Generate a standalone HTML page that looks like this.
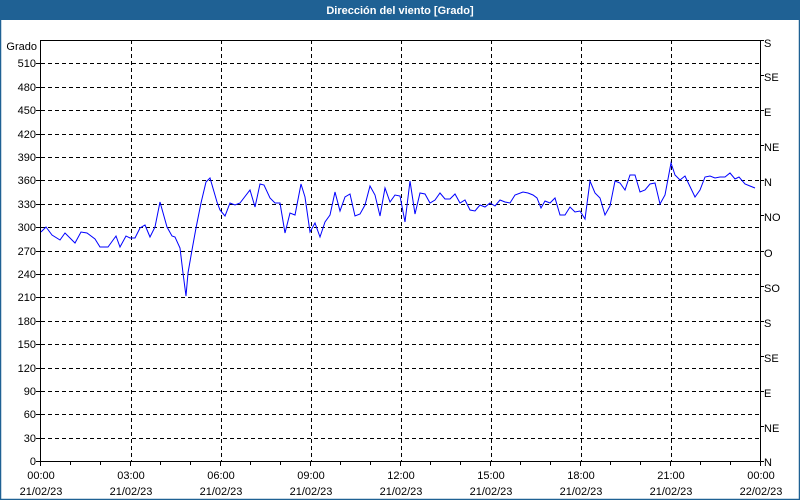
<!DOCTYPE html>
<html><head><meta charset="utf-8"><style>
html,body{margin:0;padding:0;background:#fff}
svg{display:block}
text{font-family:"Liberation Sans",sans-serif;font-size:11px;fill:#000}
</style></head><body>
<svg width="800" height="500" viewBox="0 0 800 500" xmlns="http://www.w3.org/2000/svg">
<rect x="0" y="0" width="800" height="500" fill="#fff"/>
<rect x="0.5" y="0.5" width="799" height="499" fill="none" stroke="#1f6194" stroke-width="1.5"/>
<rect x="0" y="0" width="800" height="20" fill="#1f6194"/>
<text x="400" y="14" text-anchor="middle" style="fill:#fff;font-weight:bold;font-size:11px">Dirección del viento [Grado]</text>
<g stroke="#000" stroke-width="1" stroke-dasharray="4,3" fill="none">
<path d="M41 63.5H760M41 87.5H760M41 110.5H760M41 134.5H760M41 157.5H760M41 180.5H760M41 204.5H760M41 227.5H760M41 251.5H760M41 274.5H760M41 297.5H760M41 321.5H760M41 344.5H760M41 368.5H760M41 391.5H760M41 414.5H760M41 438.5H760"/>
<path d="M131.5 40V461M221.5 40V461M311.5 40V461M401.5 40V461M491.5 40V461M581.5 40V461M671.5 40V461"/>
</g>
<g stroke="#000" stroke-width="1" fill="none">
<path d="M40.5 40V461.5H760.5V40M40 40.5H760"/>
<path d="M36 63.5H41M36 87.5H41M36 110.5H41M36 134.5H41M36 157.5H41M36 180.5H41M36 204.5H41M36 227.5H41M36 251.5H41M36 274.5H41M36 297.5H41M36 321.5H41M36 344.5H41M36 368.5H41M36 391.5H41M36 414.5H41M36 438.5H41M36 461.5H41"/>
<path d="M760 75.5H764M760 110.5H764M760 145.5H764M760 180.5H764M760 215.5H764M760 251.5H764M760 286.5H764M760 321.5H764M760 356.5H764M760 391.5H764M760 426.5H764M760 40.5H764M760 461.5H764"/>
<path d="M40.5 461V466M70.5 461V465M100.5 461V465M130.5 461V466M160.5 461V465M190.5 461V465M220.5 461V466M250.5 461V465M280.5 461V465M310.5 461V466M340.5 461V465M370.5 461V465M400.5 461V466M430.5 461V465M460.5 461V465M490.5 461V466M520.5 461V465M550.5 461V465M580.5 461V466M610.5 461V465M640.5 461V465M670.5 461V466M700.5 461V465M730.5 461V465M760.5 461V466"/>
</g>
<g text-anchor="end">
<text x="37" y="50">Grado</text>
<text x="36" y="67">510</text><text x="36" y="91">480</text><text x="36" y="114">450</text><text x="36" y="138">420</text><text x="36" y="161">390</text><text x="36" y="184">360</text><text x="36" y="208">330</text><text x="36" y="231">300</text><text x="36" y="255">270</text><text x="36" y="278">240</text><text x="36" y="301">210</text><text x="36" y="325">180</text><text x="36" y="348">150</text><text x="36" y="372">120</text><text x="36" y="395">90</text><text x="36" y="418">60</text><text x="36" y="442">30</text><text x="36" y="465">0</text>
</g>
<g>
<text x="764" y="47">S</text><text x="764" y="81">SE</text><text x="764" y="116">E</text><text x="764" y="151">NE</text><text x="764" y="186">N</text><text x="764" y="221">NO</text><text x="764" y="257">O</text><text x="764" y="292">SO</text><text x="764" y="327">S</text><text x="764" y="362">SE</text><text x="764" y="397">E</text><text x="764" y="432">NE</text><text x="764" y="466">N</text>
</g>
<g text-anchor="middle">
<text x="41" y="479">00:00</text><text x="41" y="495">21/02/23</text>
<text x="131" y="479">03:00</text><text x="131" y="495">21/02/23</text>
<text x="221" y="479">06:00</text><text x="221" y="495">21/02/23</text>
<text x="311" y="479">09:00</text><text x="311" y="495">21/02/23</text>
<text x="401" y="479">12:00</text><text x="401" y="495">21/02/23</text>
<text x="491" y="479">15:00</text><text x="491" y="495">21/02/23</text>
<text x="581" y="479">18:00</text><text x="581" y="495">21/02/23</text>
<text x="671" y="479">21:00</text><text x="671" y="495">21/02/23</text>
<text x="761" y="479">00:00</text><text x="761" y="495">22/02/23</text>
</g>
<polyline fill="none" stroke="#0000ff" stroke-width="1" points="41,232 46,227 52,235 60,240 65,233 75,243 81,232 87,233 95,239 100,247 108,247 116,236 120,247 126,236 130,238 135,238 140,228 145,225 150,237 155,227 160,202 167,227 172,236 175,237 180,248 183,273 186,296 188,273 192,250 196,228 201,203 206,182 210,178 217,202 220,210 225,216 230,203 235,205 240,203 250,190 255,207 260,184 264,185 270,198 275,203 280,203 285,233 290,213 295,215 301,184 305,197 310,232 315,223 320,237 325,222 330,215 335,192 340,211 345,197 350,194 355,216 360,214 365,205 370,186 375,195 380,216 385,188 390,202 395,195 400,196 405,222 410,181 415,214 420,193 425,194 430,203 435,200 440,193 445,199 450,199 455,194 460,203 465,200 470,210 475,211 480,205 485,207 490,203 495,206 500,200 505,202 510,203 515,195 523,192 528,193 533,195 537,198 541,208 545,201 550,203 555,198 560,215 565,215 570,207 575,212 580,211 585,219 590,181 595,193 600,198 605,215 610,206 615,181 620,183 625,190 630,175 635,175 640,192 645,190 650,184 655,183 660,204 665,195 671,163 675,175 680,180 685,176 695,197 700,190 705,177 710,176 715,178 720,177 725,177 730,173 735,179 739,177 745,184 750,186 755,188"/>
</svg>
</body></html>
